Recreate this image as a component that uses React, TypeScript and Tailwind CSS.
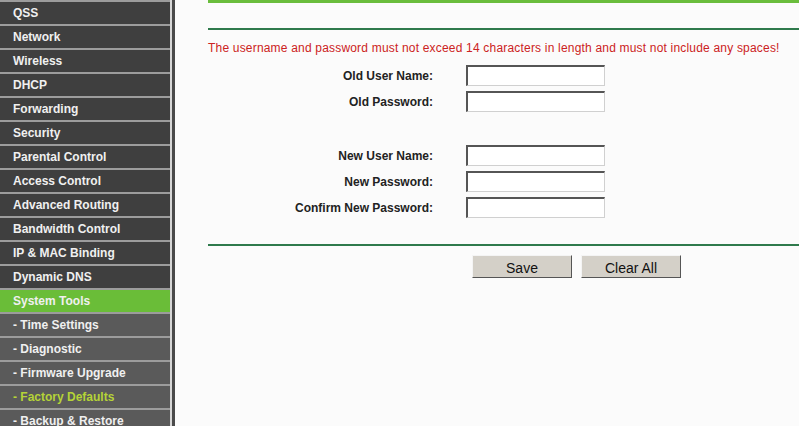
const menu: { label: string; kind?: "active" | "sub" | "current" }[] = [
  { label: "QSS" },
  { label: "Network" },
  { label: "Wireless" },
  { label: "DHCP" },
  { label: "Forwarding" },
  { label: "Security" },
  { label: "Parental Control" },
  { label: "Access Control" },
  { label: "Advanced Routing" },
  { label: "Bandwidth Control" },
  { label: "IP & MAC Binding" },
  { label: "Dynamic DNS" },
  { label: "System Tools", kind: "active" },
  { label: "- Time Settings", kind: "sub" },
  { label: "- Diagnostic", kind: "sub" },
  { label: "- Firmware Upgrade", kind: "sub" },
  { label: "- Factory Defaults", kind: "current" },
  { label: "- Backup & Restore", kind: "sub" },
];

function MenuItem({ label, kind }: { label: string; kind?: string }) {
  let bg = "bg-[#3f3f3f]";
  let color = "text-[#f0f0f0]";
  if (kind === "active") {
    bg = "bg-[#6abd38]";
  } else if (kind === "sub") {
    bg = "bg-[#5a5a5a]";
  } else if (kind === "current") {
    bg = "bg-[#5a5a5a]";
    color = "text-[#b5d337]";
  }
  return (
    <div className={`h-[24px] shrink-0 border-t-2 border-[#9c9c9c] ${bg} ${color} flex items-center pl-[13px] text-[12px] font-bold`}>
      {label}
    </div>
  );
}

function Field({ label, password }: { label: string; password?: boolean }) {
  return (
    <div className="flex h-[26px] items-center">
      <div className="w-[225px] pt-[2px] text-right text-[12px] font-bold text-[#222]">{label}</div>
      <input
        type={password ? "password" : "text"}
        className="ml-[33px] h-[21px] w-[139px] border-t-2 border-l-2 border-b border-r border-t-[#555] border-l-[#555] border-b-[#d0d0d0] border-r-[#d0d0d0] bg-white outline-none"
      />
    </div>
  );
}

export default function App() {
  return (
    <div className="flex h-[426px] w-[799px] overflow-hidden font-['Liberation_Sans',Arial,sans-serif]">
      <nav className="flex w-[170px] shrink-0 flex-col bg-[#3f3f3f]">
        {menu.map((m) => (
          <MenuItem key={m.label} label={m.label} kind={m.kind} />
        ))}
      </nav>
      <div className="w-[2px] shrink-0 bg-[#d6d6d6]" />
      <div className="w-[3px] shrink-0 bg-[#4a4a4a]" />
      <main className="flex-1 bg-[#fbfbfb] pl-[33px]">
        <div className="h-[3px] bg-[#6abd3c]" />
        <div className="mt-[25px] h-[2px] bg-[#2f7a4c]" />
        <p className="mt-[10px] text-[12px] leading-[16px] tracking-[0.19px] text-[#cc2222]">
          The username and password must not exceed 14 characters in length and must not include any spaces!
        </p>
        <div className="mt-[6px] flex flex-col">
          <Field label="Old User Name:" />
          <Field label="Old Password:" password />
          <div className="h-[28px]" />
          <Field label="New User Name:" />
          <Field label="New Password:" password />
          <Field label="Confirm New Password:" password />
        </div>
        <div className="mt-[24px] h-[2px] bg-[#2f7a4c]" />
        <div className="mt-[9px] flex gap-[9px] pl-[264px]">
          <button className="h-[23px] w-[100px] border border-t-[#f4f4f4] border-l-[#f4f4f4] border-b-[#555] border-r-[#555] bg-[#d4d0c8] pt-[2px] text-[14px] text-[#111]">
            Save
          </button>
          <button className="h-[23px] w-[100px] border border-t-[#f4f4f4] border-l-[#f4f4f4] border-b-[#555] border-r-[#555] bg-[#d4d0c8] pt-[2px] text-[14px] text-[#111]">
            Clear All
          </button>
        </div>
      </main>
    </div>
  );
}
